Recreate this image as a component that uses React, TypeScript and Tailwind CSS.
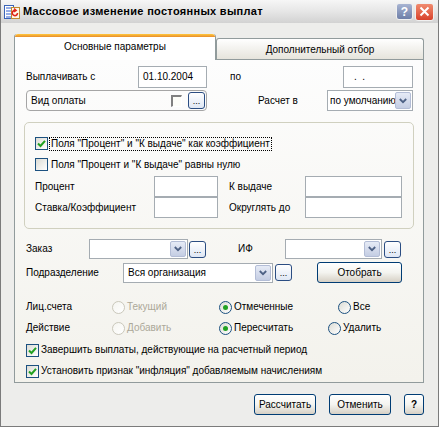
import React from "react"

const xpBtn =
  "flex items-center justify-center rounded-[3px] border border-[#003c74] bg-gradient-to-b from-[#ffffff] via-[#f4f4f0] to-[#d6d0c5] text-black"

function Ellipsis() {
  return (
    <div className="flex h-[17px] w-[17px] shrink-0 items-end justify-center rounded-[3px] border border-[#2b4d82] bg-gradient-to-b from-[#ffffff] to-[#dfe7f4] pb-[2px] text-[9px] leading-none text-black">
      ...
    </div>
  )
}

function Chevron() {
  return (
    <div className="flex h-full w-[16px] shrink-0 items-center justify-center rounded-[2px] border border-[#b3bdd6] bg-gradient-to-b from-[#e6ebf6] to-[#c4cde3]">
      <svg width="8" height="6" viewBox="0 0 8 6">
        <path d="M0.8 1 L4 4.2 L7.2 1" fill="none" stroke="#4d6185" strokeWidth="1.8" />
      </svg>
    </div>
  )
}

function Combo({ className, text }: { className: string; text?: string }) {
  return (
    <div className={`flex h-[20px] items-stretch border border-[#a5acb2] bg-white p-px ${className}`}>
      <div className="flex-1 overflow-hidden whitespace-nowrap pl-[3px] leading-[16px]">{text}</div>
      <Chevron />
    </div>
  )
}

function Check({ checked }: { checked?: boolean }) {
  return (
    <div className="flex h-[13px] w-[13px] shrink-0 items-center justify-center border border-[#1c5180] bg-gradient-to-br from-[#dcdcd5] to-[#ffffff]">
      {checked && (
        <svg width="9" height="9" viewBox="0 0 9 9">
          <path d="M1 4.5 L3.5 7 L8 1.8" fill="none" stroke="#21a121" strokeWidth="2" />
        </svg>
      )}
    </div>
  )
}

function Radio({ checked, disabled, label }: { checked?: boolean; disabled?: boolean; label: string }) {
  return (
    <div className="flex items-center gap-[2px]">
      <div
        className={`flex h-[13px] w-[13px] shrink-0 items-center justify-center rounded-full border bg-gradient-to-br ${
          disabled ? "border-[#cac8bb] from-[#f5f5f0] to-[#ffffff]" : "border-[#1c5180] from-[#dcdcd5] to-[#ffffff]"
        }`}
      >
        {checked && <div className="h-[5px] w-[5px] rounded-full bg-[#21a121]" />}
      </div>
      <span className={disabled ? "text-[#aca899]" : "text-black"}>{label}</span>
    </div>
  )
}

function TitleIcon() {
  return (
    <svg width="16" height="16" viewBox="0 0 16 16" className="shrink-0">
      <rect x="0.5" y="1.5" width="9" height="13" fill="#fff" stroke="#3a64b8" />
      <path d="M2 4h5M2 7h5M2 10h5M2 13h5" stroke="#2f5fd0" strokeWidth="1.2" />
      <rect x="7.5" y="3.5" width="8" height="11" fill="#fff8e8" stroke="#c08a30" />
      <path d="M13.5 9 A2.6 2.6 0 1 1 11 6.4" fill="none" stroke="#e0241a" strokeWidth="1.6" />
      <path d="M10 4.6 L12.2 6.4 L10 8" fill="none" stroke="#e0241a" strokeWidth="1.4" />
    </svg>
  )
}

export default function App() {
  return (
    <div className="flex h-[427px] w-[439px] flex-col border-x border-b border-[#7b7b7b] bg-[#ededeb] font-['Liberation_Sans',Arial,sans-serif] text-[10px] leading-none text-black">
      {/* title bar */}
      <div className="flex h-[23px] shrink-0 items-center bg-gradient-to-b from-[#f6f6f6] via-[#e6e6e6] to-[#d2d2d2] pl-[3px] pr-[4px]">
        <TitleIcon />
        <span className="ml-[3px] text-[11px] font-bold tracking-[0.3px]">
          Массовое изменение постоянных выплат
        </span>
        <div className="ml-auto flex items-center gap-[2px]">
          <div className="flex h-[17px] w-[17px] items-center justify-center rounded-[3px] border border-[#f0f0f0] bg-gradient-to-b from-[#a8b4d2] to-[#6e7fa8] text-[12px] font-bold text-white">
            ?
          </div>
          <div className="flex h-[18px] w-[19px] items-center justify-center rounded-[3px] border border-[#f0f0f0] bg-gradient-to-b from-[#f08a6e] to-[#d8402a]">
            <svg width="11" height="11" viewBox="0 0 11 11">
              <path d="M1.5 1.5 L9.5 9.5 M9.5 1.5 L1.5 9.5" stroke="#fff" strokeWidth="2" />
            </svg>
          </div>
        </div>
      </div>

      <div className="flex flex-col pl-[13px] pr-[14px] pt-[11px]">
        {/* tabs */}
        <div className="relative z-10 flex h-[25px] items-end">
          <div className="-mb-px flex h-[26px] w-[202px] flex-col rounded-t-[3px] border-x border-[#919b9c] bg-white">
            <div className="h-[3px] rounded-t-[3px] bg-gradient-to-b from-[#ffc83c] to-[#e68b2c]" />
            <div className="flex flex-1 items-center justify-center pb-[3px]">Основные параметры</div>
          </div>
          <div className="flex h-[21px] w-[208px] items-center justify-center rounded-t-[3px] border-x border-t border-[#919b9c] bg-gradient-to-b from-[#ffffff] to-[#e6e4dc] pt-px">
            Дополнительный отбор
          </div>
        </div>

        {/* panel */}
        <div className="flex h-[324px] w-[410px] flex-col border border-[#919b9c] bg-gradient-to-b from-[#fdfdfd] to-[#f3f2ec] pl-[11px] pt-[6px]">
          <div className="flex h-[22px] items-center">
            <span className="w-[112px]">Выплачивать с</span>
            <div className="flex h-[22px] w-[69px] items-center border border-[#a5acb2] bg-white pl-[4px]">01.10.2004</div>
            <span className="ml-[23px] w-[113px]">по</span>
            <div className="flex h-[22px] w-[70px] items-center border border-[#a5acb2] bg-white pl-[10px]">.&nbsp;&nbsp;.</div>
          </div>

          <div className="mt-[2px] flex h-[21px] items-center">
            <div className="flex h-[21px] w-[181px] items-center rounded-[4px] border border-[#a5a5a5] pl-[4px] pr-[1px]">
              <span className="flex-1">Вид оплаты</span>
              <div className="mr-[6px] h-[12px] w-[11px] border-l-2 border-t-2 border-b border-r border-l-[#808080] border-t-[#808080] border-b-white border-r-white bg-[#fdfdf8]" />
              <Ellipsis />
            </div>
            <span className="ml-[51px] w-[69px]">Расчет в</span>
            <div className="flex h-[21px] w-[86px] items-stretch border border-[#a5acb2] bg-white p-px">
              <div className="flex-1 overflow-hidden whitespace-nowrap pl-[1px] leading-[17px]">по умолчанию</div>
              <Chevron />
            </div>
          </div>

          {/* group */}
          <div className="-ml-[2px] mt-[11px] flex h-[107px] w-[390px] flex-col rounded-[5px] border border-[#d0d0bf] pl-[10px] pt-[14px]">
            <div className="flex h-[13px] items-center gap-[1px]">
              <Check checked />
              <span className="border border-dotted border-black px-px leading-[12px]">
                Поля "Процент" и "К выдаче" как коэффициент
              </span>
            </div>
            <div className="mt-[8px] flex h-[13px] items-center gap-[3px]">
              <Check />
              <span>Поля "Процент и "К выдаче" равны нулю</span>
            </div>
            <div className="mt-[5px] flex h-[21px] items-center">
              <span className="w-[119px]">Процент</span>
              <div className="h-[21px] w-[64px] border border-[#a5acb2] bg-white" />
              <span className="ml-[11px] w-[76px]">К выдаче</span>
              <div className="h-[21px] w-[97px] border border-[#a5acb2] bg-white" />
            </div>
            <div className="flex h-[21px] items-center">
              <span className="w-[119px]">Ставка/Коэффициент</span>
              <div className="h-[21px] w-[64px] border border-[#a5acb2] bg-white" />
              <span className="ml-[11px] w-[76px]">Округлять до</span>
              <div className="h-[21px] w-[97px] border border-[#a5acb2] bg-white" />
            </div>
          </div>

          <div className="mt-[10px] flex h-[20px] items-center">
            <span className="w-[63px]">Заказ</span>
            <Combo className="w-[99px]" />
            <div className="ml-[1px]">
              <Ellipsis />
            </div>
            <span className="ml-[32px] w-[47px]">ИФ</span>
            <Combo className="w-[97px]" />
            <div className="ml-[2px]">
              <Ellipsis />
            </div>
          </div>

          <div className="mt-[3px] flex h-[21px] items-center">
            <span className="w-[97px]">Подразделение</span>
            <Combo className="w-[150px]" text="Вся организация" />
            <div className="ml-[2px]">
              <Ellipsis />
            </div>
            <div className={`ml-[25px] h-[21px] w-[85px] ${xpBtn}`}>Отобрать</div>
          </div>

          <div className="mt-[17px] flex h-[14px] items-center">
            <span className="w-[86px]">Лиц.счета</span>
            <div className="w-[107px]">
              <Radio disabled label="Текущий" />
            </div>
            <div className="w-[119px]">
              <Radio checked label="Отмеченные" />
            </div>
            <Radio label="Все" />
          </div>

          <div className="mt-[7px] flex h-[14px] items-center">
            <span className="w-[86px]">Действие</span>
            <div className="w-[107px]">
              <Radio disabled label="Добавить" />
            </div>
            <div className="w-[109px]">
              <Radio checked label="Пересчитать" />
            </div>
            <Radio label="Удалить" />
          </div>

          <div className="mt-[8px] flex h-[14px] items-center gap-[2px]">
            <Check checked />
            <span>Завершить выплаты, действующие на расчетный период</span>
          </div>
          <div className="mt-[7px] flex h-[14px] items-center gap-[2px]">
            <Check checked />
            <span>Установить признак "инфляция" добавляемым начислениям</span>
          </div>
        </div>

        {/* buttons */}
        <div className="mt-[11px] flex items-center justify-end gap-[13px]">
          <div className={`h-[21px] w-[62px] ${xpBtn}`}>Рассчитать</div>
          <div className={`h-[21px] w-[62px] ${xpBtn}`}>Отменить</div>
          <div className={`h-[21px] w-[20px] font-bold ${xpBtn}`}>?</div>
        </div>
      </div>
    </div>
  )
}
